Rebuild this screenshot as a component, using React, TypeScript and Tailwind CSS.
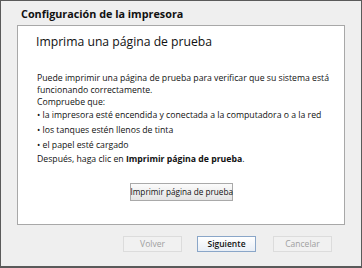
export default function App() {
  return (
    <div className="w-[362px] h-[268px] bg-[#efefef] border border-[#5a5a5a] border-b-2 flex flex-col font-['Open_Sans',sans-serif] text-[#111]">
      <div className="h-[24px] pl-[20px] pt-[5px] text-[10.8px] font-bold leading-[16px]">
        Configuración de la impresora
      </div>
      <div className="ml-[16px] w-[328px] h-[200px] bg-white border border-[#a8a8a8] flex flex-col">
        <div className="pl-[18px] pt-[7px] text-[12.2px] leading-[18px]">Imprima una página de prueba</div>
        <div className="pl-[19px] pt-[21px] text-[8.7px] leading-[12px] whitespace-nowrap">
          <p>Puede imprimir una página de prueba para verificar que su sistema está</p>
          <p>funcionando correctamente.</p>
          <p>Compruebe que:</p>
          <ul className="leading-[15px]">
            <li>• la impresora esté encendida y conectada a la computadora o a la red</li>
            <li>• los tanques estén llenos de tinta</li>
            <li>• el papel esté cargado</li>
          </ul>
          <p>
            Después, haga clic en <span className="font-bold">Imprimir página de prueba</span>.
          </p>
        </div>
        <div className="flex justify-center pt-[18px]">
          <button className="w-[103px] h-[18px] border border-[#a9a9a9] bg-gradient-to-b from-[#fbfbfb] to-[#e4e4e4] text-[8.2px] leading-[16px] whitespace-nowrap">
            Imprimir página de prueba
          </button>
        </div>
      </div>
      <div className="flex pl-[122px] pt-[11px] gap-[15px]">
        <button className="w-[59px] h-[16px] border border-[#dcdcdc] bg-[#f1f1f1] text-[8.5px] text-[#a0a0a0] leading-[14px]">Volver</button>
        <button className="w-[59px] h-[16px] border border-[#8aa6c8] bg-gradient-to-b from-[#ffffff] to-[#e8eef6] text-[8.5px] font-semibold leading-[14px]">Siguiente</button>
        <button className="ml-[2px] w-[59px] h-[16px] border border-[#dcdcdc] bg-[#f1f1f1] text-[8.5px] text-[#a0a0a0] leading-[14px]">Cancelar</button>
      </div>
    </div>
  );
}
